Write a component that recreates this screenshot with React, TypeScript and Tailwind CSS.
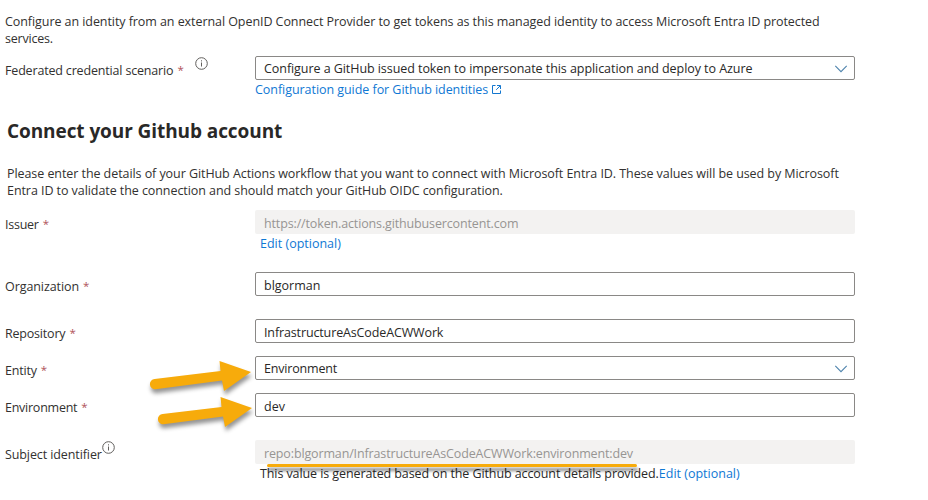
import type { ReactNode } from "react";

function InfoIcon({ className }: { className: string }) {
  return (
    <svg className={className} width="13" height="13" viewBox="0 0 13 13" fill="none">
      <circle cx="6.5" cy="6.5" r="5.8" stroke="#605e5c" strokeWidth="1" />
      <path d="M6.5 5.5v4" stroke="#605e5c" />
      <path d="M6.5 3.3v1.1" stroke="#605e5c" />
    </svg>
  );
}

function Chevron() {
  return (
    <svg className="-mr-[2px] mt-px" width="14" height="8" viewBox="0 0 14 8" fill="none">
      <path d="M1.3 0.9L7 6.6L12.7 0.9" stroke="#4f84ad" strokeWidth="1.1" />
    </svg>
  );
}

function ExternalIcon() {
  return (
    <svg className="mt-[4px] ml-[4px]" width="9" height="9" viewBox="0 0 9 9" fill="none" stroke="#1377cf">
      <path d="M3.5 0.5H0.5V8.5H8.5V5.5" />
      <path d="M5 0.5H8.5V4M8.2 0.8L4.2 4.8" />
    </svg>
  );
}

function Star() {
  return <span className="-mt-px ml-[4px] text-[11.5px] text-[#b0525a]">*</span>;
}

function Label({ children, className = "" }: { children: ReactNode; className?: string }) {
  return (
    <div className="flex w-[250px] shrink-0 pt-[6px]">
      <span className={className}>{children}</span>
      <Star />
    </div>
  );
}

function Field({ value, className = "", select = false, disabled = false }: { value: string; className?: string; select?: boolean; disabled?: boolean }) {
  return (
    <div
      className={
        disabled
          ? "flex h-6 w-[600px] items-center rounded-[2px] bg-[#f3f2f1] px-[9px] pt-[2px] text-[#979593]"
          : select
            ? "flex h-6 w-[600px] items-center justify-between rounded-[2px] border border-[#8a8886] px-2 text-[#292827]"
            : "flex h-6 w-[600px] items-center rounded-[2px] border border-[#8a8886] px-2 pt-[2px] text-[#292827]"
      }
    >
      <span className={className}>{value}</span>
      {select && <Chevron />}
    </div>
  );
}

function Annotations() {
  return (
    <svg className="pointer-events-none absolute inset-0" width="928" height="500" viewBox="0 0 928 500" fill="#f7ab0b">
      <g className="drop-shadow-[1px_4px_2px_rgba(0,0,0,0.42)]">
        <path d="M154.600 379L220.500 371L219.500 361L251 372L224 391L222 380.500L155.400 389.200A5.100 5.100 0 0 1 154.600 379Z" />
        <path d="M162.600 414L221.500 407L220.500 397L252 408L225 427L223 416.500L163.400 424.200A5.100 5.100 0 0 1 162.600 414Z" />
      </g>
      <rect className="drop-shadow-[1px_4px_1.5px_rgba(0,0,0,0.45)]" x="267" y="464" width="370" height="3" rx="1.500" />
    </svg>
  );
}

export default function App() {
  return (
    <main className="relative h-[500px] w-[928px] overflow-hidden bg-white pt-[13px] pl-[5px] font-['Open_Sans','Noto_Sans',sans-serif] text-[12.5px] leading-[17px] whitespace-nowrap text-[#323130]">
      <p className="tracking-[-0.068px]">
        Configure an identity from an external OpenID Connect Provider to get tokens as this managed identity to access Microsoft Entra ID protected
        <br />
        <span className="tracking-[-0.2px]">services.</span>
      </p>

      <section className="mt-[9px] flex">
        <div className="flex w-[250px] pt-[6px]">
          <span className="tracking-[-0.17px]">Federated credential scenario</span>
          <Star />
          <InfoIcon className="-mt-[5px] ml-[11px]" />
        </div>
        <div>
          <Field value="Configure a GitHub issued token to impersonate this application and deploy to Azure" className="tracking-[-0.06px]" select />
          <a className="flex pt-[1px] tracking-[-0.05px] text-[#0f78d4]">
            Configuration guide for Github identities
            <ExternalIcon />
          </a>
        </div>
      </section>

      <h1 className="mt-[20px] ml-[2px] text-[19px] leading-[26px] font-bold tracking-[-0.08px] text-[#292827]">Connect your Github account</h1>

      <p className="mt-[21px] ml-[2px] tracking-[-0.068px]">
        Please enter the details of your GitHub Actions workflow that you want to connect with Microsoft Entra ID. These values will be used by Microsoft
        <br />
        Entra ID to validate the connection and should match your GitHub OIDC configuration.
      </p>

      <section className="mt-[11px] flex h-[62px]">
        <Label className="tracking-[-0.25px]">Issuer</Label>
        <div>
          <Field value="https://token.actions.githubusercontent.com" className="tracking-[-0.14px]" disabled />
          <a className="block pt-[1px] pl-[5px] text-[#0f78d4]">Edit (optional)</a>
        </div>
      </section>
      <section className="flex h-[47px]">
        <Label className="tracking-[-0.08px]">Organization</Label>
        <Field value="blgorman" />
      </section>
      <section className="flex h-[37px]">
        <Label className="tracking-[-0.2px]">Repository</Label>
        <Field value="InfrastructureAsCodeACWWork" className="tracking-[-0.13px]" />
      </section>
      <section className="flex h-[37px]">
        <Label className="tracking-[-0.2px]">Entity</Label>
        <Field value="Environment" className="tracking-[-0.18px]" select />
      </section>
      <section className="flex h-[47px]">
        <Label className="tracking-[-0.25px]">Environment</Label>
        <Field value="dev" />
      </section>
      <section className="flex">
        <div className="flex w-[250px] pt-[6px]">
          <span className="tracking-[-0.1px]">Subject identifier</span>
          <InfoIcon className="-mt-[5px]" />
        </div>
        <div>
          <Field value="repo:blgorman/InfrastructureAsCodeACWWork:environment:dev" className="tracking-[-0.14px]" disabled />
          <div className="pt-[1px] pl-[5px] tracking-[-0.09px] text-[#292827]">
            This value is generated based on the Github account details provided.
            <a className="tracking-normal text-[#0f78d4]">Edit (optional)</a>
          </div>
        </div>
      </section>

      <Annotations />
    </main>
  );
}
